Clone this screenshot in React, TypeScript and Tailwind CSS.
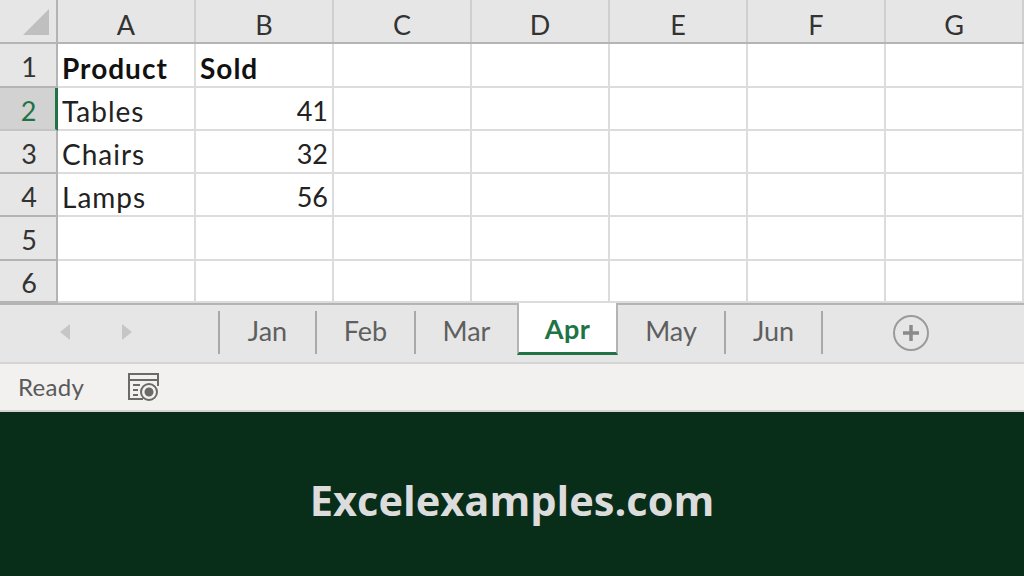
import React from 'react';

const columns = ['A', 'B', 'C', 'D', 'E', 'F', 'G'];

const rows = [
    { n: 1, h: 'h-[44px]', a: 'Product', b: 'Sold', bold: true },
    { n: 2, h: 'h-[43px]', a: 'Tables', b: '41', active: true },
    { n: 3, h: 'h-[43px]', a: 'Chairs', b: '32' },
    { n: 4, h: 'h-[43px]', a: 'Lamps', b: '56' },
    { n: 5, h: 'h-[44px]', a: '', b: '' },
    { n: 6, h: 'h-[42px]', a: '', b: '' },
];

const tabs = [
    { name: 'Jan', w: 'w-[95px]' },
    { name: 'Feb', w: 'w-[97px]' },
    { name: 'Mar', w: 'w-[101px]' },
];

const Separator = () => <div className="w-[2px] h-[43px] bg-[#a9a9a9] shrink-0" />;

const Cell = ({ children, className = '' }: { children?: React.ReactNode; className?: string }) => (
    <div className={`w-[138px] shrink-0 h-full border-r-2 border-b-2 border-[#dcdcdc] flex items-center pt-[5px] ${className}`}>{children}</div>
);

export default function App() {
    return (
        <div className="w-[1024px] h-[576px] overflow-hidden flex flex-col bg-white font-['Lato','Carlito',sans-serif] text-[27px] text-[#222222]">
            {/* Grid */}
            <div className="flex flex-col h-[303px] shrink-0 overflow-hidden">
                {/* Column headers */}
                <div className="flex h-[44px] shrink-0 bg-[#e6e6e6] border-b-2 border-[#b4b4b4]">
                    <div className="w-[58px] shrink-0 border-r-2 border-[#b4b4b4] flex items-end justify-end pr-[7px] pb-[7px]">
                        <svg width="26" height="26" viewBox="0 0 26 26">
                            <polygon points="26,0 26,26 0,26" fill="#bfbfbf" />
                        </svg>
                    </div>
                    {columns.map((c) => (
                        <div key={c} className="w-[138px] shrink-0 border-r-2 border-[#cfcfcf] flex items-center justify-center text-[#333333] pt-[8px]">
                            {c}
                        </div>
                    ))}
                </div>

                {/* Rows */}
                {rows.map((r) => (
                    <div key={r.n} className={`flex shrink-0 ${r.h}`}>
                        <div
                            className={`w-[58px] shrink-0 h-full border-r-2 border-b-2 flex items-center justify-center pl-[2px] pt-[5px] ${
                                r.active
                                    ? 'bg-[#d2d2d2] border-r-[#217346] border-r-[3px] border-b-[#c4c4c4] text-[#217346]'
                                    : 'bg-[#e6e6e6] border-[#b4b4b4] text-[#333333]'
                            }`}
                        >
                            {r.n}
                        </div>
                        <Cell className={`pl-[4px] text-[28px] tracking-[1px] ${r.bold ? 'font-bold text-[#111111]' : ''}`}>{r.a}</Cell>
                        <Cell className={r.bold ? 'pl-[4px] text-[28px] tracking-[1px] font-bold text-[#111111]' : 'justify-end pr-[4px]'}>{r.b}</Cell>
                        {columns.slice(2).map((c) => (
                            <Cell key={c} />
                        ))}
                    </div>
                ))}
            </div>

            {/* Sheet tabs */}
            <div className="relative flex items-start h-[61px] bg-[#e6e6e6] border-t-2 border-b-2 border-b-[#d4d4d4] border-t-[#b4b4b4] shrink-0">
                <div className="w-[218px] h-full flex items-start shrink-0 pl-[59px] pt-[19px] gap-[50px]">
                    <svg width="12" height="16" viewBox="0 0 12 16"><polygon points="11,0 11,16 1,8" fill="#c6c6c6" /></svg>
                    <svg width="12" height="16" viewBox="0 0 12 16"><polygon points="1,0 1,16 11,8" fill="#c6c6c6" /></svg>
                </div>
                <div className="flex items-start pt-[6px] text-[#5f5f5f]">
                    <Separator />
                    {tabs.map((t) => (
                        <React.Fragment key={t.name}>
                            <div className={`${t.w} h-[43px] flex items-center justify-center pb-[3px]`}>{t.name}</div>
                            <Separator />
                        </React.Fragment>
                    ))}
                </div>
                <div className="w-[101px] h-[52px] -mt-[2px] -ml-[2px] shrink-0 bg-white border-x-2 border-t-0 border-[#b4b4b4] border-b-[3px] border-b-[#217346] flex items-center justify-center font-bold text-[#217346] tracking-[0.5px] pt-[4px]">
                    Apr
                </div>
                <div className="flex items-start pt-[6px] text-[#5f5f5f]">
                    <div className="w-[106px] h-[43px] flex items-center justify-center pb-[3px]">May</div>
                    <Separator />
                    <div className="w-[95px] h-[43px] flex items-center justify-center pb-[3px]">Jun</div>
                    <Separator />
                </div>
                <div className="ml-[70px] mt-[10px] w-[36px] h-[36px] rounded-full border-2 border-[#9b9b9b] flex items-center justify-center">
                    <svg width="20" height="20" viewBox="0 0 20 20">
                        <path d="M10 2v16M2 10h16" stroke="#8a8a8a" strokeWidth="3.5" />
                    </svg>
                </div>
            </div>

            {/* Status bar */}
            <div className="flex items-center h-[48px] bg-[#f2f1ef] border-b-2 border-[#d4d4d4] shrink-0 text-[#5a5a5a] text-[24px] tracking-[0.3px]">
                <span className="ml-[18px] w-[109px]">Ready</span>
                <svg width="32" height="30" viewBox="0 0 32 30" fill="none" stroke="#6a6a6a" strokeWidth="2">
                    <path d="M16 27H2V2h29v12" />
                    <path d="M2 8h29" />
                    <path d="M6 13h7M6 18h5M6 23h5" />
                    <circle cx="22" cy="20" r="8" />
                    <circle cx="22" cy="20" r="3.5" fill="#6a6a6a" />
                </svg>
            </div>

            {/* Banner */}
            <div className="flex-1 bg-[#082e1a] flex items-center justify-center">
                <span className="font-['Open_Sans',sans-serif] font-bold text-[41.6px] text-[#dcdcdc] pt-[13px]">Excelexamples.com</span>
            </div>
        </div>
    );
}
